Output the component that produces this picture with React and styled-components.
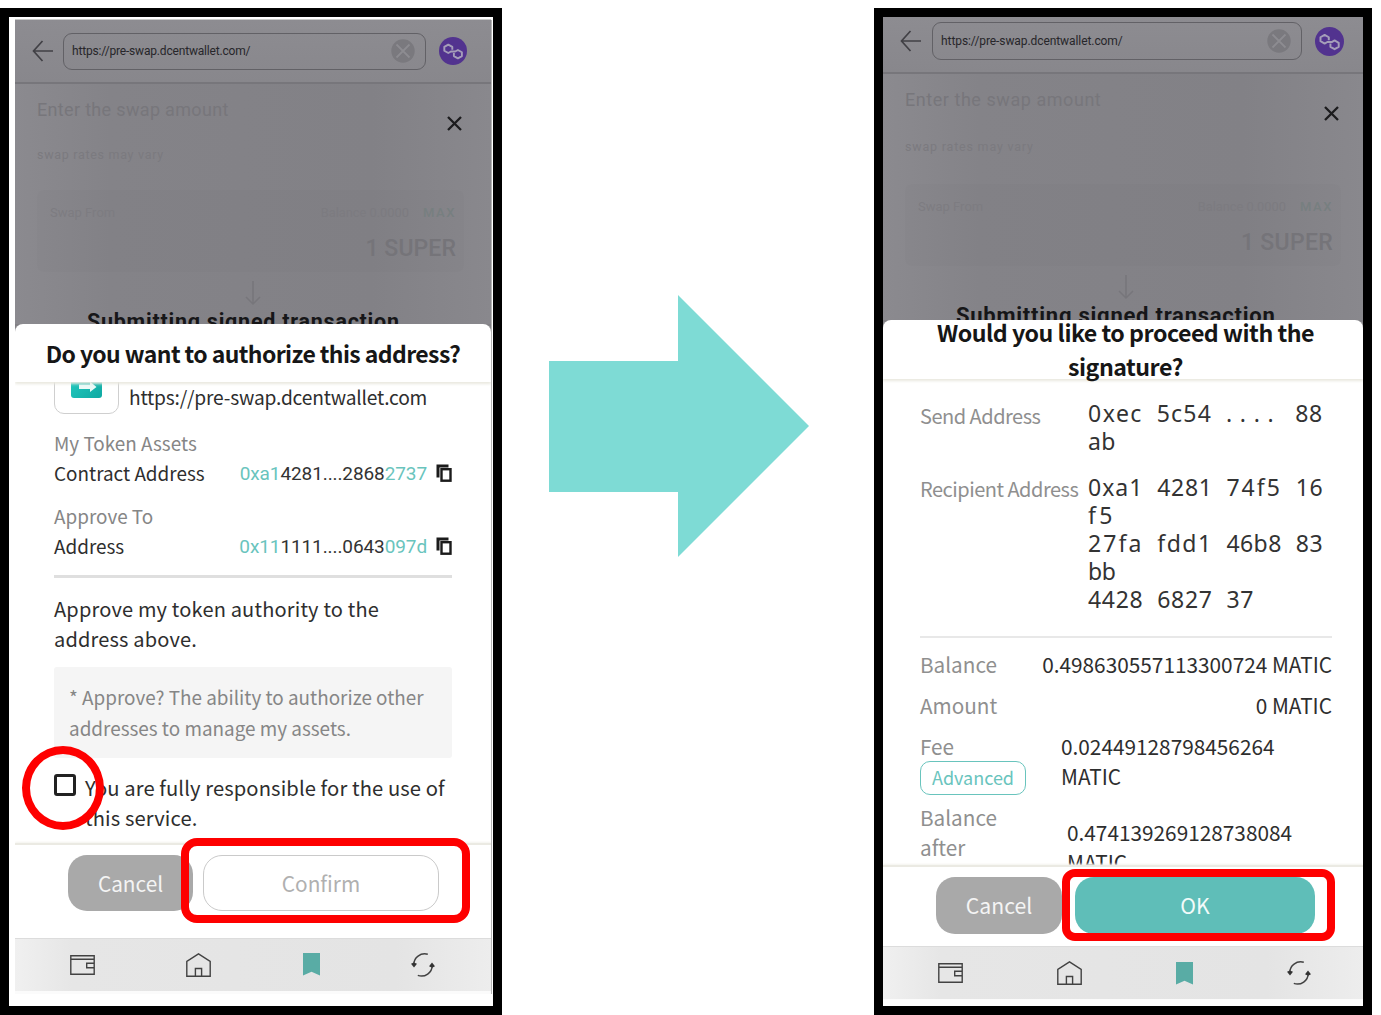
import React from "react";
import styled, { createGlobalStyle, css } from "styled-components";

const sans = `"Noto Sans CJK KR", "Noto Sans", sans-serif`;
const roboto = `Roboto, "Liberation Sans", sans-serif`;
const teal = "#69c4bd";

const Global = createGlobalStyle`
  * { box-sizing: border-box; }
  body { margin: 0; background: #fff; overflow: hidden; font-family: ${sans}; }
  p, h2 { margin: 0; font-weight: inherit; }
  button { font: inherit; padding: 0; margin: 0; border: 0; background: none; }
  svg { display: block; flex: none; }
`;

const Board = styled.main`
  display: flex;
  width: 1381px;
  height: 1015px;
  padding-top: 8px;
  overflow: hidden;
`;

const Frame = styled.section`
  position: relative;
  flex: none;
  width: ${(p) => p.$w}px;
  height: 1007px;
  border: 9px solid #000;
  background: #fff;
  padding: ${(p) => p.$pad || "0"};
`;

const ArrowSlot = styled.div`
  flex: none;
  width: 372px;
  padding: 287px 0 0 47px;
`;

const Screen = styled.div`
  display: flex;
  flex-direction: column;
  width: 100%;
  background: #828186;
  ${(p) => p.$edge && css`box-shadow: 1px 0 0 #b5b5b5, 0 -1px 0 #c9cbc9;`}
`;

const Dimmed = styled.div`
  height: ${(p) => p.$h}px;
  flex: none;
  overflow: hidden;
  background: linear-gradient(90deg, #8b8a8f 0, #848388 20%, #828186 75%, #89888d 100%);
  font-family: ${roboto};
`;

const AppBar = styled.header`
  display: flex;
  align-items: center;
  height: ${(p) => p.$h}px;
  padding: ${(p) => p.$pad};
  background: linear-gradient(#8d8c91, #88878c);
  border-bottom: 2px solid #77767b;
`;

const UrlField = styled.div`
  display: flex;
  align-items: center;
  justify-content: space-between;
  width: ${(p) => p.$w}px;
  height: ${(p) => p.$h}px;
  margin: 0 13px 0 ${(p) => p.$ml}px;
  padding: 0 10px 0 8px;
  border: 1.5px solid #626166;
  border-radius: 9px;
  font-size: 12px;
  letter-spacing: ${(p) => p.$ls}px;
  color: #27262a;
`;

const Intro = styled.div`
  display: flex;
  justify-content: space-between;
  height: ${(p) => p.$h}px;
  padding: ${(p) => p.$pad};
`;

const Faint = styled.p`
  font-size: ${(p) => p.$size}px;
  font-weight: ${(p) => p.$weight || 400};
  line-height: 24px;
  letter-spacing: ${(p) => p.$ls || 0}px;
  color: ${(p) => p.$color || "#77767b"};
  white-space: nowrap;
`;

const RateNote = styled(Faint)`
  padding-left: 22px;
`;

const SwapCard = styled.div`
  height: 82px;
  margin: ${(p) => p.$m};
  padding: 11px 8px 0 13px;
  background: rgba(0, 0, 0, 0.008);
  border-radius: 6px;
`;

const CardLine = styled.div`
  display: flex;
  gap: 14px;
  height: 36px;
`;

const Grow = styled.div`
  flex: 1;
`;

const SwapTotal = styled(Faint)`
  text-align: right;
`;

const DownSlot = styled.div`
  display: flex;
  justify-content: center;
  padding: ${(p) => p.$pad};
`;

const Submitting = styled.p`
  padding-left: ${(p) => p.$left}px;
  font-size: ${(p) => p.$size}px;
  line-height: 32px;
  font-weight: 700;
  letter-spacing: ${(p) => p.$ls}px;
  color: #161618;
  white-space: nowrap;
`;

const Sheet = styled.div`
  display: flex;
  flex-direction: column;
  background: #fff;
  border-radius: 8px 8px 0 0;
`;

const SheetTitle = styled.h2`
  position: relative;
  z-index: 1;
  display: flex;
  align-items: center;
  justify-content: center;
  height: ${(p) => p.$h}px;
  padding: ${(p) => p.$pad || 0};
  border-radius: 8px 8px 0 0;
  box-shadow: 0 2px 3px #e9e8df;
  clip-path: inset(0 0 -6px 0);
  font-size: ${(p) => p.$size}px;
  font-weight: 700;
  line-height: 34px;
  letter-spacing: ${(p) => p.$ls}px;
  text-align: center;
  color: #161616;
  white-space: nowrap;
`;

const SheetBody = styled.div`
  height: ${(p) => p.$h}px;
  overflow: hidden;
  padding: ${(p) => p.$pad};
`;

const Site = styled.div`
  display: flex;
  gap: 10px;
  height: 32px;
`;

const Tile = styled.div`
  display: flex;
  flex: none;
  justify-content: center;
  width: 65px;
  height: 65px;
  margin-top: -33px;
  padding-top: 17px;
  border: 1.5px solid #cfcfcf;
  border-radius: 10px;
`;

const Text = styled.p`
  font-size: ${(p) => p.$size || 18.9}px;
  line-height: ${(p) => p.$lh || 30}px;
  letter-spacing: ${(p) => p.$ls || 0}px;
  color: ${(p) => p.$color || "#2e2e2e"};
  white-space: nowrap;
`;

const Entry = styled.div`
  padding-top: ${(p) => p.$top}px;
`;

const EntryRow = styled.div`
  display: flex;
  align-items: center;
  justify-content: space-between;
  height: 30px;
`;

const Address = styled.div`
  display: flex;
  align-items: center;
  gap: 9px;
  font-family: ${roboto};
  font-size: 19px;
  letter-spacing: -0.1px;
  color: #333;
`;

const Mark = styled.span`
  color: ${teal};
`;

const Rule = styled.hr`
  height: ${(p) => p.$h}px;
  margin: ${(p) => p.$m};
  border: 0;
  background: ${(p) => p.$color};
`;

const Note = styled.div`
  height: 91px;
  margin-top: 13px;
  padding: 14px 15px;
  background: #f5f5f5;
  border-radius: 3px;
`;

const Consent = styled.label`
  display: flex;
  gap: 9px;
  margin-top: 15px;
`;

const Checkbox = styled.span`
  flex: none;
  width: 22px;
  height: 22px;
  margin-top: 1px;
  border: 3px solid #222;
  border-radius: 3px;
`;

const Footer = styled.footer`
  display: flex;
  gap: ${(p) => p.$gap}px;
  height: ${(p) => p.$h}px;
  padding: 10px 0 0 53px;
  border-top: 2px solid #ebeae3;
  box-shadow: 0 -1px 2px #f4f3ee;
  clip-path: inset(-4px 0 0 0);
`;

const Action = styled.button`
  width: ${(p) => p.$w}px;
  height: ${(p) => p.$h}px;
  padding-bottom: ${(p) => p.$lift}px;
  border-radius: 19px;
  font-size: ${(p) => p.$size}px;
  line-height: 30px;
  ${(p) => p.$kind === "cancel" && css`background: #a9a9a9; color: #f4f4f4;`}
  ${(p) => p.$kind === "outline" && css`border: 1.5px solid #cacaca; background: #fff; color: #b0b0b0;`}
  ${(p) => p.$kind === "primary" && css`background: #5fbeb8; color: #f2fbfa;`}
`;

const Nav = styled.nav`
  display: flex;
  align-items: center;
  justify-content: space-between;
  height: 53px;
  padding: ${(p) => p.$pad};
  background: linear-gradient(90deg, #f0f0f0 0, #e6e6e6 12%, #e4e4e4 80%, #ededed 100%);
  border-top: 1px solid #dcdcdc;
`;

const Bottom = styled.div`
  height: ${(p) => p.$h}px;
  background: #fbfbfb;
`;

/* red call-outs drawn over the screens */
const Callout = styled.div`
  position: absolute;
  left: ${(p) => p.$x}px;
  top: ${(p) => p.$y}px;
  width: ${(p) => p.$w}px;
  height: ${(p) => p.$h}px;
  border: 8px solid #fe0000;
  border-radius: ${(p) => p.$r};
  z-index: 2;
`;

const HexRow = styled.div`
  display: grid;
  grid-template-columns: 168px 1fr;
  margin-bottom: ${(p) => p.$mb}px;
`;

const HexLabel = styled(Text)`
  padding-top: ${(p) => p.$top}px;
`;

const Hex = styled.div`
  font-family: "Noto Sans", sans-serif;
  font-size: 23px;
  line-height: 28px;
  color: #333;
  white-space: pre;
`;

const Group = styled.span`
  letter-spacing: ${(p) => p.$ls}px;
  word-spacing: 6px;
`;

const Detail = styled.div`
  display: flex;
  justify-content: space-between;
  height: 41px;
`;

const SplitDetail = styled.div`
  display: grid;
  grid-template-columns: ${(p) => p.$col}px 1fr;
  height: ${(p) => p.$h}px;
`;

const Lowered = styled.div`
  padding-top: ${(p) => p.$by}px;
`;

const Advanced = styled.button`
  display: block;
  width: 106px;
  height: 34px;
  padding-bottom: 2px;
  border: 1.5px solid ${teal};
  border-radius: 10px;
  font-size: 18px;
  line-height: 29px;
  color: ${teal};
`;

const BackIcon = () => (
  <svg width="22" height="22" viewBox="0 0 22 22" fill="none" stroke="#414045" strokeWidth="1.7">
    <path d="M21 11H1.500M10.500 1L1.500 11l9 10" />
  </svg>
);

const ClearIcon = () => (
  <svg width="24" height="24" viewBox="0 0 24 24">
    <circle cx="12" cy="12" r="11.700" fill="#7a797e" />
    <path d="M5.500 5.500l13 13M18.500 5.500l-13 13" stroke="#8d8c91" strokeWidth="1.800" />
  </svg>
);

const PolygonIcon = ({ size }) => (
  <svg width={size} height={size} viewBox="0 0 28 28">
    <circle cx="14" cy="14" r="14" fill="#52338f" />
    <path
      d="M13.300 12.700V9.900L9.300 7.600 5.300 9.900v3.800l4 2.300 2.600-1.500L16.200 14.500 18.900 13 22.900 15.300v3.800l-4 2.300-4-2.300v-3.200M11.500 14.600l4.900-.1"
      fill="none"
      stroke="#a59eb9"
      strokeWidth="1.900"
      strokeLinejoin="round"
    />
  </svg>
);

const CloseIcon = () => (
  <svg width="15" height="15" viewBox="0 0 15 15" stroke="#1c1c1e" strokeWidth="2.300">
    <path d="M1 1l13 13M14 1L1 14" />
  </svg>
);

const DownIcon = () => (
  <svg width="16" height="25" viewBox="0 0 16 25" fill="none" stroke="#77767b" strokeWidth="1.500">
    <path d="M8 0v23M1 16l7 7 7-7" />
  </svg>
);

const SwapLogo = () => (
  <svg width="31" height="31" viewBox="0 0 31 31">
    <defs>
      <linearGradient id="swapLogo" x1="0" y1="0" x2="1" y2="1">
        <stop offset="0" stopColor="#25cfc4" />
        <stop offset="1" stopColor="#0fa9a2" />
      </linearGradient>
    </defs>
    <rect width="31" height="31" rx="3" fill="url(#swapLogo)" />
    <path d="M8 17.500h11v-3l6.500 5.500-6.500 5v-3H8z" fill="#eafaf8" />
    <path d="M23 8H12V4l-7 6 7 5v-3h11z" fill="#eafaf8" />
  </svg>
);

const CopyIcon = () => (
  <svg width="16" height="18" viewBox="0 0 16 18" fill="none" stroke="#1b1b1b">
    <path d="M2 13.500V2H12.500" strokeWidth="3" />
    <rect x="5.500" y="5.200" width="9" height="11.500" strokeWidth="2.400" fill="#fff" />
  </svg>
);

const WalletIcon = () => (
  <svg width="25" height="20" viewBox="0 0 25 20" fill="none" stroke="#424242" strokeWidth="1.400">
    <path d="M.8.8h23.400v18.400H.8zM.8 4.300h23.400M24.200 8.200h-7.500v4.600h7.500" />
  </svg>
);

const HomeIcon = () => (
  <svg width="25" height="24" viewBox="0 0 25 24" fill="none" stroke="#424242" strokeWidth="1.400">
    <path d="M.8 23.200V8.300L12.500.9l11.700 7.400v14.900zM9.400 23v-7.500h6.200V23" />
  </svg>
);

const BookmarkIcon = () => (
  <svg width="17" height="23" viewBox="0 0 17 23">
    <path d="M0 0h17v22.500l-8.500-3.700L0 22.500z" fill="#59aca5" />
  </svg>
);

const RefreshIcon = () => (
  <svg width="24" height="24" viewBox="0 0 24 24" fill="none" stroke="#424242" strokeWidth="1.500">
    <path d="M16.800 1.300C9.500-.6 2.800 4.500 2.800 11.500M6.800 22.400C14 25 21.200 19.500 21.200 12.500" />
    <path d="M0 10.800L2.800 9.500l3.200 1.300-3 3.600zM18 13.200l3-3.600 3 3.600-2.900 1.600z" fill="#333" stroke="none" />
  </svg>
);

const BigArrow = () => (
  <svg width="261" height="262" viewBox="0 0 261 262">
    <path d="M0 66h129V0l131 131-131 131v-65H0z" fill="#7edbd5" />
  </svg>
);

const NavBar = ({ pad }) => (
  <Nav $pad={pad}>
    <WalletIcon />
    <HomeIcon />
    <BookmarkIcon />
    <RefreshIcon />
  </Nav>
);

/* advance widths (em) used to space each group on a fixed pitch */
const ADV = { x: 0.529, e: 0.564, c: 0.48, a: 0.561, b: 0.615, d: 0.615, f: 0.344, ".": 0.268 };
const pitch = 13.84;

const HexLine = ({ value }) => {
  const groups = value.split(" ");
  return (
    <div>
      {groups.map((g, i) => {
        const natural = [...g].reduce((sum, ch) => sum + (ADV[ch] || 0.572) * 23, 0);
        const ls = (g.length * pitch - natural) / g.length;
        const last = i === groups.length - 1;
        return (
          <React.Fragment key={i}>
            <Group $ls={ls}>{g}</Group>
            {!last && <Group $ls={1.86}> </Group>}
          </React.Fragment>
        );
      })}
    </div>
  );
};

const SwapPreview = ({ margin, ls }) => (
  <SwapCard $m={margin}>
    <CardLine>
      <Faint $size={13} $color="#7d7c81">Swap From</Faint>
      <Grow />
      <Faint $size={12.8} $color="#7c7b80">Balance 0.0000</Faint>
      <Faint $size={13} $ls={1.6} $weight={500} $color="#777f80">MAX</Faint>
    </CardLine>
    <SwapTotal $size={23} $weight={500} $ls={ls} $color="#757479">1 SUPER</SwapTotal>
  </SwapCard>
);

const Authorize = () => (
  <Frame $w={502} $pad="3px 2px 0 6px">
    <Screen $edge>
      <Dimmed $h={304}>
        <AppBar $h={64} $pad="0 0 0 17px">
          <BackIcon />
          <UrlField $w={363} $h={37} $ml={9} $ls={-0.18}>
            https://pre-swap.dcentwallet.com/
            <ClearIcon />
          </UrlField>
          <PolygonIcon size={28} />
        </AppBar>
        <Intro $h={59} $pad="14px 29px 0 22px">
          <Faint $size={18} $ls={0.33}>Enter the swap amount</Faint>
          <Lowered $by={18}><CloseIcon /></Lowered>
        </Intro>
        <RateNote $size={12.5} $ls={0.7} $color="#7b7a7f">swap rates may vary</RateNote>
        <SwapPreview margin="23px 27px 0 22px" ls={0.1} />
        <DownSlot $pad="9px 0 0"><DownIcon /></DownSlot>
        <Submitting $left={72} $size={21.5} $ls={0.75}>Submitting signed transaction</Submitting>
      </Dimmed>
      <Sheet>
        <SheetTitle $h={58} $size={23} $ls={-0.6}>Do you want to authorize this address?</SheetTitle>
        <SheetBody $h={461} $pad="0 39px">
          <Site>
            <Tile><SwapLogo /></Tile>
            <Text $size={19.2} $ls={-0.2}>https://pre-swap.dcentwallet.com</Text>
          </Site>
          <Entry $top={14}>
            <Text $color="#868686">My Token Assets</Text>
            <EntryRow>
              <Text>Contract Address</Text>
              <Address>
                <span><Mark>0xa1</Mark>4281....2868<Mark>2737</Mark></span>
                <CopyIcon />
              </Address>
            </EntryRow>
          </Entry>
          <Entry $top={13}>
            <Text $color="#868686">Approve To</Text>
            <EntryRow>
              <Text>Address</Text>
              <Address>
                <span><Mark>0x11</Mark>1111....0643<Mark>097d</Mark></span>
                <CopyIcon />
              </Address>
            </EntryRow>
          </Entry>
          <Rule $h={3} $m="14px 0 16px" $color="#dfdfdf" />
          <Text $size={20} $ls={0.18}>Approve my token authority to the<br />address above.</Text>
          <Note>
            <Text $lh={31} $color="#868686">* Approve? The ability to authorize other<br />addresses to manage my assets.</Text>
          </Note>
          <Consent>
            <Checkbox />
            <Text $size={20.2} $ls={0.1}>You are fully responsible for the use of<br />this service.</Text>
          </Consent>
        </SheetBody>
        <Footer $h={95} $gap={10}>
          <Action $kind="cancel" $w={125} $h={56} $size={20.8} $lift={1}>Cancel</Action>
          <Action $kind="outline" $w={236} $h={56} $size={20.8} $lift={1}>Confirm</Action>
        </Footer>
        <NavBar pad="0 56px 1px 55px" />
        <Bottom $h={3} />
      </Sheet>
    </Screen>
    <Callout $x={13} $y={729} $w={82} $h={84} $r="50%" />
    <Callout $x={172} $y={821} $w={289} $h={85} $r="16px" />
  </Frame>
);

const Signature = () => (
  <Frame $w={498}>
    <Screen>
      <Dimmed $h={303}>
        <AppBar $h={57} $pad="0 0 7px 17px">
          <BackIcon />
          <UrlField $w={370} $h={38} $ml={10} $ls={-0.08}>
            https://pre-swap.dcentwallet.com/
            <ClearIcon />
          </UrlField>
          <PolygonIcon size={29} />
        </AppBar>
        <Intro $h={61} $pad="14px 24px 0 22px">
          <Faint $size={18} $ls={0.55}>Enter the swap amount</Faint>
          <Lowered $by={18}><CloseIcon /></Lowered>
        </Intro>
        <RateNote $size={12.5} $ls={0.8} $color="#7b7a7f">swap rates may vary</RateNote>
        <SwapPreview margin="25px 22px 0 22px" ls={0.3} />
        <DownSlot $pad="9px 0 0 6px"><DownIcon /></DownSlot>
        <Submitting $left={73} $size={22} $ls={0.75}>Submitting signed transaction</Submitting>
      </Dimmed>
      <Sheet>
        <SheetTitle $h={59} $size={23.2} $ls={-0.5} $pad="0 0 1px 5px">Would you like to proceed with the<br />signature?</SheetTitle>
        <SheetBody $h={486} $pad="20px 31px 0 37px">
          <HexRow $mb={18}>
            <HexLabel $size={20} $ls={-0.5} $top={2} $color="#8f8f8f">Send Address</HexLabel>
            <Hex>
              <HexLine value="0xec 5c54 .... 88" />
              <HexLine value="ab" />
            </Hex>
          </HexRow>
          <HexRow $mb={23}>
            <HexLabel $size={20} $ls={-0.5} $top={1} $color="#8f8f8f">Recipient Address</HexLabel>
            <Hex>
              <HexLine value="0xa1 4281 74f5 16" />
              <HexLine value="f5" />
              <HexLine value="27fa fdd1 46b8 83" />
              <HexLine value="bb" />
              <HexLine value="4428 6827 37" />
            </Hex>
          </HexRow>
          <Rule $h={2} $m="0 0 11px" $color="#e8e8e8" />
          <Detail>
            <Text $size={20.7} $color="#8f8f8f">Balance</Text>
            <Text $size={20.8}>0.498630557113300724 MATIC</Text>
          </Detail>
          <Detail>
            <Text $size={20.7} $color="#8f8f8f">Amount</Text>
            <Text $size={20.8}>0 MATIC</Text>
          </Detail>
          <SplitDetail $col={141} $h={71}>
            <div>
              <Text $size={20.7} $color="#8f8f8f">Fee</Text>
              <Advanced>Advanced</Advanced>
            </div>
            <Text $size={20.8}>0.02449128798456264<br />MATIC</Text>
          </SplitDetail>
          <SplitDetail $col={147} $h={77}>
            <Text $size={20.7} $color="#8f8f8f">Balance<br />after</Text>
            <Lowered $by={15}><Text $size={20.8}>0.474139269128738084<br />MATIC</Text></Lowered>
          </SplitDetail>
        </SheetBody>
        <Footer $h={81} $gap={13}>
          <Action $kind="cancel" $w={126} $h={57} $size={21.2} $lift={2}>Cancel</Action>
          <Action $kind="primary" $w={240} $h={57} $size={21.2} $lift={2}>OK</Action>
        </Footer>
        <NavBar pad="0 52px 0 55px" />
        <Bottom $h={1} />
      </Sheet>
    </Screen>
    <Callout $x={179} $y={852} $w={273} $h={72} $r="13px" />
  </Frame>
);

export default function App() {
  return (
    <>
      <Global />
      <Board>
        <Authorize />
        <ArrowSlot><BigArrow /></ArrowSlot>
        <Signature />
      </Board>
    </>
  );
}
